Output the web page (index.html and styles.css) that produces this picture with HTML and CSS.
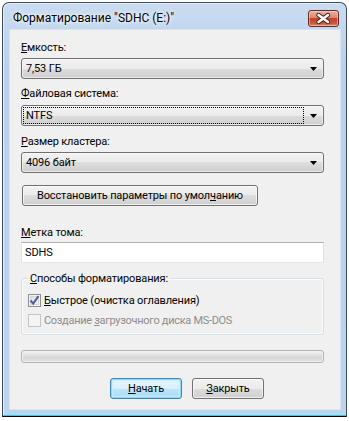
FILE: index.html
```html
<!DOCTYPE html>
<html lang="ru">
  <head>
    <meta charset="UTF-8" />
    <meta name="viewport" content="width=device-width, initial-scale=1.0" />
    <title>Форматирование</title>
    <link rel="stylesheet" href="styles.css">
  </head>

  <body>
    <div class="window">
      <div class="titlebar">
        <span class="title">Форматирование "SDHC (E:)"</span>
        <div class="close">
          <svg width="31" height="17" viewBox="0 0 31 17">
            <path d="M10.5 5 L20 12 M20 5 L10.5 12" stroke="#4a1c14" stroke-width="4.4" stroke-linecap="round" fill="none" />
            <path d="M10.5 5 L20 12 M20 5 L10.5 12" stroke="#ffffff" stroke-width="2.6" stroke-linecap="round" fill="none" />
          </svg>
        </div>
      </div>

      <div class="client">
        <div class="label l1"><u>Е</u>мкость:</div>
        <div class="combo c1">
          <span class="combo-text">7,53 ГБ</span>
          <span class="arrow-box"><svg width="7" height="4" viewBox="0 0 7 4"><path d="M0 0h7l-3.5 4z" fill="#000" /></svg></span>
        </div>

        <div class="label l2"><u>Ф</u>айловая система:</div>
        <div class="combo c2">
          <span class="combo-text focus">NTFS</span>
          <span class="arrow-box"><svg width="7" height="4" viewBox="0 0 7 4"><path d="M0 0h7l-3.5 4z" fill="#000" /></svg></span>
        </div>

        <div class="label l3"><u>Р</u>азмер кластера:</div>
        <div class="combo c3">
          <span class="combo-text">4096 байт</span>
          <span class="arrow-box"><svg width="7" height="4" viewBox="0 0 7 4"><path d="M0 0h7l-3.5 4z" fill="#000" /></svg></span>
        </div>

        <div class="btn restore">Восстановить параметры по умол<u>ч</u>анию</div>

        <div class="label l4"><u>М</u>етка тома:</div>
        <div class="textbox">SDHS</div>

        <fieldset class="group">
          <legend><u>С</u>пособы форматирования:</legend>
          <div class="check-row">
            <span class="checkbox checked">
              <svg width="11" height="11" viewBox="0 0 11 11"><path d="M1.5 5.5 L4.2 8.6 L9.5 1.2" stroke="#4a5d9c" stroke-width="2" fill="none" /></svg>
            </span>
            <span><u>Б</u>ыстрое (очистка оглавления)</span>
          </div>
          <div class="check-row disabled">
            <span class="checkbox"></span>
            <span class="dos">Создание <u>з</u>агрузочного диска MS-DOS</span>
          </div>
        </fieldset>

        <div class="progress"></div>

        <div class="actions">
          <div class="btn default"><u>Н</u>ачать</div>
          <div class="btn"><u>З</u>акрыть</div>
        </div>
      </div>
    </div>
  </body>
</html>
```

FILE: styles.css
```css
body,
html {
  margin: 0;
  height: 100%;
  background: #ffffff;
  font-family: Roboto, "Noto Sans", sans-serif;
  font-size: 11px;
  letter-spacing: -0.15px;
  color: #000;
}

.window {
  box-sizing: border-box;
  width: 345px;
  height: 415px;
  margin: 2px 0 0 2px;
  border: 1px solid #404a58;
  border-bottom-color: #000;
  border-radius: 7px 7px 0 0;
  background: linear-gradient(#c9dcf1, #bad2ec 60px, #bcd3ec);
  box-shadow: inset 0 -1px 0 #2ccbea, inset 1px 1px 0 #e4eefa;
  padding: 0 6px 7px 7px;
  display: flex;
  flex-direction: column;
}

.titlebar {
  height: 27px;
  display: flex;
  align-items: flex-start;
  justify-content: space-between;
}

.title {
  font-size: 12px;
  letter-spacing: 0;
  margin: 7px 0 0 3px;
  line-height: 16px;
  text-shadow: 0 0 6px #ffffff, 0 0 3px #ffffff;
}

.close {
  width: 31px;
  height: 17px;
  box-sizing: border-box;
  margin: 7px 1px 0 0;
  border: 1px solid #6b2a20;
  border-radius: 3px;
  background: linear-gradient(#eab2a4, #d98573 45%, #c2412a 50%, #cc5a41 85%, #e39a7f);
  box-shadow: inset 0 0 0 1px rgba(255, 230, 220, 0.45);
  overflow: hidden;
}

.close svg {
  display: block;
  margin: -1px 0 0 -1px;
}

.client {
  flex: 1;
  background: #f0f0f0;
  padding: 10px 16px 0 11px;
  box-shadow: 0 0 0 1px #d8e4f1;
}

.label {
  line-height: 15px;
  height: 15px;
}

.l2 { margin-top: 7px; }
.l3 { margin-top: 8px; }
.l4 { margin-top: 19px; }

.combo {
  box-sizing: border-box;
  height: 21px;
  display: flex;
  border: 1px solid #707070;
  border-radius: 3px;
  background: linear-gradient(#f2f2f2, #ebebeb 50%, #dddddd 50%, #cfcfcf);
  box-shadow: inset 0 0 0 1px rgba(255, 255, 255, 0.55);
  padding-left: 1px;
}

.c1 { margin-top: 3px; }
.c2 { margin-top: 4px; }
.c3 { margin-top: 3px; }

.combo-text {
  flex: 1;
  margin: 1px 0;
  padding-left: 2px;
  border: 1px solid transparent;
  display: flex;
  align-items: center;
}

.combo-text.focus {
  border: 1px dotted #000;
}

.arrow-box {
  width: 19px;
  display: flex;
  align-items: center;
  justify-content: center;
}

.arrow-box svg {
  display: block;
}

.btn {
  box-sizing: border-box;
  height: 21px;
  display: flex;
  align-items: center;
  justify-content: center;
  border: 1px solid #707070;
  border-radius: 3px;
  background: linear-gradient(#f2f2f2, #ebebeb 50%, #dddddd 50%, #cfcfcf);
  box-shadow: inset 0 0 0 1px rgba(255, 255, 255, 0.7);
}

.restore {
  width: 236px;
  margin: 12px 0 0 1px;
}

.textbox {
  box-sizing: border-box;
  height: 21px;
  margin-top: 2px;
  background: #ffffff;
  border: 1px solid;
  border-color: #abadb3 #dbdfe6 #e3e9ef #e2e3ea;
  padding-left: 3px;
  display: flex;
  align-items: center;
}

.group {
  margin: 8px 0 0 0;
  padding: 4px 6px 4px 6px;
  border: 1px solid #d5dfe5;
  border-radius: 3px;
  box-shadow: inset 0 0 0 1px #fbfbfb;
  min-width: 0;
}

.group legend {
  padding: 0 2px;
  line-height: 15px;
}

.check-row {
  display: flex;
  align-items: center;
  height: 20px;
  gap: 3px;
}

.checkbox {
  box-sizing: border-box;
  width: 13px;
  height: 13px;
  border: 1px solid #8e8f8f;
  background: linear-gradient(135deg, #dcdcdc, #f6f6f6);
  box-shadow: inset 0 0 0 1px #f4f4f4, inset 0 0 0 2px #d6d6d6;
  display: flex;
  align-items: center;
  justify-content: center;
}

.checkbox svg {
  display: block;
}

.disabled {
  color: #8d8d8d;
}

.dos {
  letter-spacing: -0.3px;
}

.disabled .checkbox {
  border-color: #c5c5c5;
  background: #f4f4f4;
  box-shadow: none;
}

.progress {
  box-sizing: border-box;
  height: 13px;
  margin-top: 15px;
  border: 1px solid #b2b2b2;
  border-radius: 3px;
  background: linear-gradient(#f3f3f3, #e2e2e2 35%, #d6d6d6 60%, #e4e4e4);
  box-shadow: inset 0 0 0 1px #f2f2f2;
}

.actions {
  display: flex;
  gap: 10px;
  margin-top: 15px;
  padding-left: 89px;
}

.actions .btn {
  width: 72px;
}

.btn.default {
  border-color: #3c86b8;
  background: linear-gradient(#eaf6fd, #d9f0fc 50%, #bee6fd 50%, #a7d9f5);
  box-shadow: inset 0 0 0 1px #8fdaf8, inset 0 0 2px 2px #c8ecfc;
}
```
